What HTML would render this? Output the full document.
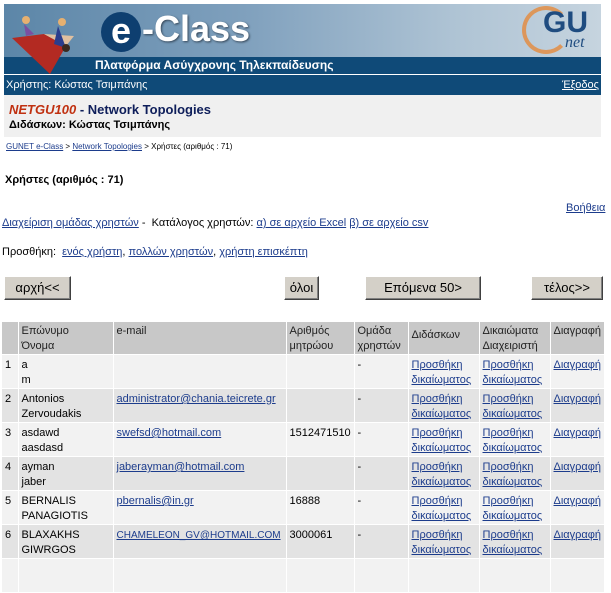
<!DOCTYPE html>
<html><head><meta charset="utf-8"><style>
*{margin:0;padding:0;box-sizing:border-box}
body{width:611px;height:565px;overflow:hidden;background:#fff;font-family:"Liberation Sans","DejaVu Sans",sans-serif;font-size:11px;color:#000;position:relative}
.a{position:absolute;white-space:nowrap}
a{color:#1c3c8c;text-decoration:underline}
.btn{position:absolute;top:276px;height:24px;background:#d4d0c8;border:1px solid;border-color:#fff #404040 #404040 #fff;box-shadow:inset -1px -1px 0 #808080;font-size:13px;text-align:center;line-height:21px;color:#000}
table{position:absolute;left:2px;top:322px;border-collapse:collapse;width:602px;table-layout:fixed}
td{font-size:11px;vertical-align:top;padding:3px 3px 0 3px;line-height:15px;border-right:1px solid #fff;border-bottom:1px solid #fff;height:34px;overflow:hidden;white-space:nowrap}
tr.h td{background:#c8c8c8;height:31px;color:#222;padding-top:2px}
tr.o td{background:#f2f2f2}
tr.e td{background:#e3e3e3}
</style></head><body>
<div class="a" style="left:4px;top:4px;width:597px;height:53px;background:linear-gradient(90deg,#5c86a8 0%,#7fa0bd 40%,#aec3d4 75%,#c6d4df 100%)"></div>
<div class="a" style="left:4px;top:57px;width:597px;height:17px;background:#0f4a78"></div>
<svg class="a" style="left:4px;top:8px" width="100" height="66" viewBox="0 0 100 66">
<path d="M8 30 L40 26 L62 38 L46 66 Z" fill="#b32a22"/>
<path d="M40 26 L70 28 L62 38 Z" fill="#e0c0a0"/>
<circle cx="22" cy="12" r="4" fill="#e6b070"/><path d="M20 16 L30 26 L22 28 Z" fill="#7a4fa0"/>
<circle cx="58" cy="14" r="4" fill="#e6b070"/><path d="M54 18 L62 40 L50 36 Z" fill="#2a3d8c"/>
<circle cx="62" cy="40" r="4" fill="#3a2a20"/>
</svg>
<div class="a" style="left:101px;top:12px;width:40px;height:40px;border-radius:50%;background:#0e3f70;color:#fff;font-size:36px;font-weight:bold;line-height:37px;text-align:center">e</div>
<div class="a" style="left:142px;top:9px;color:#fff;font-size:36px;font-weight:bold;line-height:40px;text-shadow:1px 1px 2px #345">-Class</div>
<div class="a" style="left:95px;top:57px;color:#fff;font-size:12px;font-weight:bold;line-height:17px">Πλατφόρμα Ασύγχρονης Τηλεκπαίδευσης</div>
<div class="a" style="left:522px;top:6px;width:48px;height:48px;border-radius:50%;border:4px solid #e58a3c;border-right-color:transparent;opacity:.8"></div>
<div class="a" style="left:543px;top:6px;color:#1f4c80;font-size:30px;font-weight:bold;line-height:34px">GU</div>
<div class="a" style="left:565px;top:34px;color:#1f4c80;font-size:16px;font-style:italic;font-family:'Liberation Serif',serif">net</div>
<div class="a" style="left:4px;top:75px;width:597px;height:20px;background:#0f4a78"></div>
<div class="a" style="left:6px;top:79px;color:#fff;font-size:11px">Χρήστης: Κώστας Τσιμπάνης</div>
<div class="a" style="left:562px;top:79px;color:#fff;font-size:11px;text-decoration:underline">Έξοδος</div>
<div class="a" style="left:4px;top:95px;width:597px;height:42px;background:#f0f0f0"></div>
<div class="a" style="left:9px;top:102px;font-size:13px;font-weight:bold;color:#0e1e5a"><i style="color:#c03010">NETGU100</i> - Network Topologies</div>
<div class="a" style="left:9px;top:119px;font-size:11px;font-weight:bold">Διδάσκων: Κώστας Τσιμπάνης</div>
<div class="a" style="left:6px;top:142px;font-size:8px"><a href="#">GUNET e-Class</a> &gt; <a href="#">Network Topologies</a> &gt; Χρήστες (αριθμός : 71)</div>
<div class="a" style="left:5px;top:174px;font-size:11px;font-weight:bold">Χρήστες (αριθμός : 71)</div>
<div class="a" style="left:566px;top:202px"><a href="#">Βοήθεια</a></div>
<div class="a" style="left:2px;top:217px"><a href="#">Διαχείριση ομάδας χρηστών</a> -&nbsp; Κατάλογος χρηστών: <a href="#">α) σε αρχείο Excel</a> <a href="#">β) σε αρχείο csv</a></div>
<div class="a" style="left:2px;top:246px">Προσθήκη:&nbsp; <a href="#">ενός χρήστη</a>, <a href="#">πολλών χρηστών</a>, <a href="#">χρήστη επισκέπτη</a></div>
<div class="btn" style="left:4px;width:67px">αρχή&lt;&lt;</div>
<div class="btn" style="left:284px;width:35px">όλοι</div>
<div class="btn" style="left:365px;width:116px">Επόμενα 50&gt;</div>
<div class="btn" style="left:531px;width:72px">τέλος&gt;&gt;</div>
<table>
<colgroup><col style="width:16px"><col style="width:95px"><col style="width:173px"><col style="width:68px"><col style="width:54px"><col style="width:71px"><col style="width:71px"><col style="width:54px"></colgroup>
<tr class="h"><td></td><td>Επώνυμο<br>Όνομα</td><td>e-mail</td><td>Αριθμός<br>μητρώου</td><td>Ομάδα<br>χρηστών</td><td style="padding-top:6px">Διδάσκων</td><td>Δικαιώματα<br>Διαχειριστή</td><td>Διαγραφή</td></tr>
<tr class="o"><td>1</td><td>a<br>m</td><td></td><td></td><td>-</td><td><a href="#">Προσθήκη<br>δικαίωματος</a></td><td><a href="#">Προσθήκη<br>δικαίωματος</a></td><td><a href="#">Διαγραφή</a></td></tr>
<tr class="e"><td>2</td><td>Antonios<br>Zervoudakis</td><td><a href="#">administrator@chania.teicrete.gr</a></td><td></td><td>-</td><td><a href="#">Προσθήκη<br>δικαίωματος</a></td><td><a href="#">Προσθήκη<br>δικαίωματος</a></td><td><a href="#">Διαγραφή</a></td></tr>
<tr class="o"><td>3</td><td>asdawd<br>aasdasd</td><td><a href="#">swefsd@hotmail.com</a></td><td>1512471510</td><td>-</td><td><a href="#">Προσθήκη<br>δικαίωματος</a></td><td><a href="#">Προσθήκη<br>δικαίωματος</a></td><td><a href="#">Διαγραφή</a></td></tr>
<tr class="e"><td>4</td><td>ayman<br>jaber</td><td><a href="#">jaberayman@hotmail.com</a></td><td></td><td>-</td><td><a href="#">Προσθήκη<br>δικαίωματος</a></td><td><a href="#">Προσθήκη<br>δικαίωματος</a></td><td><a href="#">Διαγραφή</a></td></tr>
<tr class="o"><td>5</td><td>BERNALIS<br>PANAGIOTIS</td><td><a href="#">pbernalis@in.gr</a></td><td>16888</td><td>-</td><td><a href="#">Προσθήκη<br>δικαίωματος</a></td><td><a href="#">Προσθήκη<br>δικαίωματος</a></td><td><a href="#">Διαγραφή</a></td></tr>
<tr class="e"><td>6</td><td>BLAXAKHS<br>GIWRGOS</td><td><a href="#" style="font-size:10px">CHAMELEON_GV@HOTMAIL.COM</a></td><td>3000061</td><td>-</td><td><a href="#">Προσθήκη<br>δικαίωματος</a></td><td><a href="#">Προσθήκη<br>δικαίωματος</a></td><td><a href="#">Διαγραφή</a></td></tr>
<tr class="o"><td></td><td></td><td></td><td></td><td></td><td></td><td></td><td></td></tr>
</table>
</body></html>
